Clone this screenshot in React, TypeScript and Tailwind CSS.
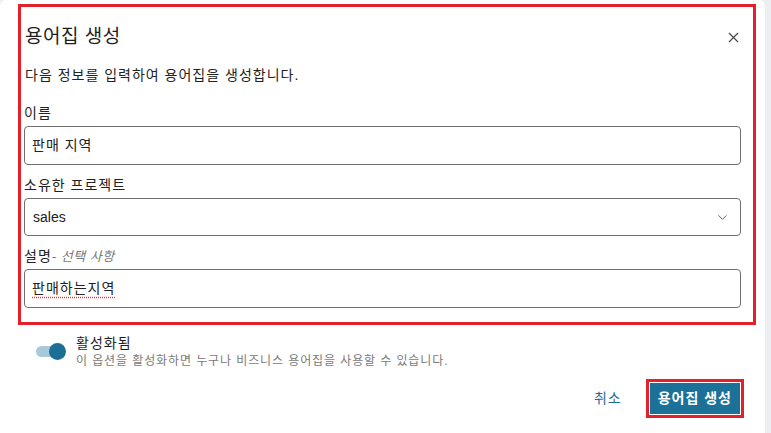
import { X, ChevronDown } from 'lucide-react'

const FONT = { fontFamily: '"Liberation Sans", "Noto Sans CJK KR", sans-serif' }

function Field({ label, children }: { label: React.ReactNode; children: React.ReactNode }) {
  return (
    <div className="flex flex-col">
      <div className="text-[14px] leading-[20px] tracking-[1px] text-[#222] h-[20px]">{label}</div>
      <div className="mt-[3px]">{children}</div>
    </div>
  )
}

export default function App() {
  return (
    <div className="w-[771px] h-[433px] bg-[#eceef2] flex overflow-hidden" style={FONT}>
      <div className="w-[765px] h-full bg-white rounded-tl-[6px] rounded-tr-[6px] flex flex-col">
        {/* highlighted form region */}
        <div className="ml-[18px] mr-[9px] mt-[4px] h-[321px] border-[3px] border-[#e4202a] pl-[3px] pr-[12px] flex flex-col">
          <div className="flex items-center justify-between mt-[16px] h-[28px]">
            <h2 className="text-[19px] leading-[28px] tracking-[0.5px] text-[#1f1f1f] pl-[1px]">용어집 생성</h2>
            <X className="w-[17px] h-[17px] text-[#444] -mr-[1px]" strokeWidth={1.6} />
          </div>
          <p className="mt-[14px] text-[14px] leading-[20px] tracking-[1px] text-[#222] pl-[1px]">
            다음 정보를 입력하여 용어집을 생성합니다.
          </p>

          <div className="mt-[18px] flex flex-col gap-[10px]">
            <Field label="이름">
              <div className="h-[39px] border border-[#6f6f6f] rounded-[4px] px-[7px] flex items-center text-[14px] tracking-[1px] text-[#222]">
                판매 지역
              </div>
            </Field>
            <Field label="소유한 프로젝트">
              <div className="h-[38px] border border-[#6f6f6f] rounded-[4px] pl-[8px] pr-[10px] flex items-center justify-between text-[14px] text-[#222]">
                <span>sales</span>
                <ChevronDown className="w-[15px] h-[15px] text-[#555]" strokeWidth={1.5} />
              </div>
            </Field>
            <Field
              label={
                <span>
                  설명<span className="text-[#777] text-[13px] italic tracking-[0.5px]">- 선택 사항</span>
                </span>
              }
            >
              <div className="h-[39px] border border-[#6f6f6f] rounded-[4px] px-[7px] flex items-center text-[14px] tracking-[1px] text-[#222]">
                <span className="underline decoration-dotted decoration-[#e53935] underline-offset-[4px]">
                  판매하는지역
                </span>
              </div>
            </Field>
          </div>
        </div>

        {/* active toggle */}
        <div className="mt-[8px] ml-[36px] flex items-start gap-[10px]">
          <div className="relative w-[30px] h-[16px] mt-[10px]">
            <div className="absolute left-0 top-[3px] w-[26px] h-[11px] rounded-full bg-[#a8cad8]" />
            <div className="absolute right-0 top-0 w-[17px] h-[17px] rounded-full bg-[#1b6f95]" />
          </div>
          <div className="flex flex-col">
            <span className="text-[14px] leading-[20px] tracking-[1px] text-[#1f1f1f]">활성화됨</span>
            <span className="text-[12px] leading-[16px] tracking-[0.9px] text-[#7a7a7a]">
              이 옵션을 활성화하면 누구나 비즈니스 용어집을 사용할 수 있습니다.
            </span>
          </div>
        </div>

        {/* footer */}
        <div className="mt-[10px] mr-[21px] flex items-center justify-end gap-[22px]">
          <button className="text-[14px] tracking-[1px] text-[#1a6e94] px-[2px]">취소</button>
          <div className="border-[3px] border-[#e4202a]">
            <button className="h-[33px] px-[8px] bg-[#1b7197] border border-white text-white text-[14px] tracking-[1px] font-semibold">
              용어집 생성
            </button>
          </div>
        </div>
      </div>
    </div>
  )
}
